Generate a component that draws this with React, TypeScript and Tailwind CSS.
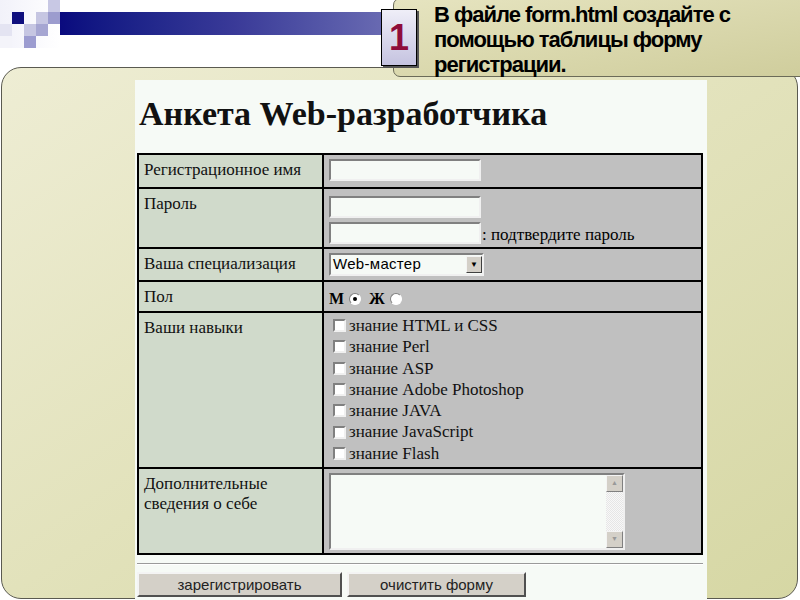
// Слайд: задание + скриншот формы регистрации (таблица).
const skills = [
  'знание HTML и CSS',
  'знание Perl',
  'знание ASP',
  'знание Adobe Photoshop',
  'знание JAVA',
  'знание JavaScript',
  'знание Flash',
];

const serif = "font-['Liberation_Serif','Times_New_Roman',serif]";
const sans = "font-['Liberation_Sans',Arial,sans-serif]";

function TextBox({ w = 'w-[152px]' }: { w?: string }) {
  return (
    <span
      className={`inline-block h-[22px] ${w} shrink-0 border-2 border-t-[#808080] border-l-[#808080] border-b-[#f0f0f0] border-r-[#f0f0f0] bg-[#f6faf6]`}
    />
  );
}

function Radio({ checked }: { checked?: boolean }) {
  return (
    <span className="mx-[5px] inline-flex h-[12px] w-[12px] items-center justify-center rounded-full border border-t-[#808080] border-l-[#808080] border-b-white border-r-white bg-white">
      {checked && <span className="h-[4px] w-[4px] rounded-full bg-black" />}
    </span>
  );
}

function Checkbox() {
  return (
    <span className="mr-[3px] inline-block h-[13px] w-[13px] shrink-0 border-2 border-t-[#808080] border-l-[#808080] border-b-[#f0f0f0] border-r-[#f0f0f0] bg-white" />
  );
}

function Row({
  label,
  h,
  children,
  last,
}: {
  label: React.ReactNode;
  h: string;
  children: React.ReactNode;
  last?: boolean;
}) {
  return (
    <div className={`flex ${h} ${last ? '' : 'border-b-2 border-black'}`}>
      <div className="w-[185px] shrink-0 border-r-2 border-black bg-[#d0dacb] px-[5px] pt-[5px] text-[17px] leading-[20px] text-[#111]">
        {label}
      </div>
      <div className="flex-1 bg-[#c0c0c0] px-[5px] pt-[4px]">{children}</div>
    </div>
  );
}

export default function App() {
  return (
    <div className="relative h-[600px] w-[800px] overflow-hidden bg-white">
      {/* Шапка слайда: клетки + синяя полоса */}
      <div className="flex h-[67px] items-start">
        <div className="grid grid-cols-[repeat(5,12px)] grid-rows-[repeat(4,12px)] bg-gradient-to-r from-[#f2f2fa] to-white">
          <span />
          <span />
          <span />
          <span />
          <span className="bg-[#c8c8e4]" />
          <span />
          <span className="bg-[#10107e]" />
          <span />
          <span className="bg-[#c6c6e2]" />
          <span className="bg-[#9c9cce]" />
          <span className="bg-[#e4e4f2]" />
          <span />
          <span className="bg-[#c6c6e2]" />
          <span className="bg-[#a6a6d2]" />
          <span />
          <span className="bg-[#f4f4fa]" />
          <span />
          <span className="bg-[#9c9cd0]" />
        </div>
        <div className="mt-[12px] h-[23px] w-[350px] bg-gradient-to-r from-[#0a0a7e] via-[#3a3a98] to-[#7272b6]" />
      </div>

      {/* Заголовок задания */}
      <div className="absolute left-[393px] top-[-2px] h-[79px] w-[420px] rounded-[7px] border border-[#6b6b58] bg-gradient-to-br from-[#e6e4c0] to-[#cfcd9c] pl-[40px] pt-[3px]">
        <p className="font-['Liberation_Sans_Narrow','Arial_Narrow','Liberation_Sans',sans-serif] text-[22px] font-bold leading-[25px] tracking-[-1px] text-black">
          В файле form.html создайте с
          <br />
          помощью таблицы форму
          <br />
          регистрации.
        </p>
      </div>
      <div className="absolute left-[381px] top-[9px] flex h-[57px] w-[36px] items-center justify-center border border-black bg-gradient-to-b from-[#efeef8] to-[#c5c3e0] shadow-[2px_2px_0_#555]">
        <span className={`${sans} text-[36px] font-bold text-[#8e0c3a]`}>1</span>
      </div>

      {/* Панель */}
      <div className="ml-[1px] h-[532px] w-[797px] rounded-[20px] border border-[#5a5a50] bg-gradient-to-br from-[#eeedd4] via-[#e2e2bb] to-[#d6d7a4] pl-[133px] pt-[12px]">
        <div className={`${serif} h-[520px] w-[572px] bg-[#f6faf6] pl-[2px] pt-[15px]`}>
          <h1 className="pl-[2px] text-[34px] font-bold leading-[38px] text-[#111]">
            Анкета Web-разработчика
          </h1>
          <div className="mt-[20px] w-[566px] border-2 border-black">
            <Row label="Регистрационное имя" h="h-[34px]">
              <TextBox />
            </Row>
            <Row label="Пароль" h="h-[60px]">
              <div className="flex flex-col gap-[4px] pt-[3px]">
                <TextBox />
                <div className="flex items-end text-[17px] leading-[18px]">
                  <TextBox />
                  <span className="ml-[1px]">: подтвердите пароль</span>
                </div>
              </div>
            </Row>
            <Row label="Ваша специализация" h="h-[33px]">
              <div className="flex h-[23px] w-[155px] items-center border-2 border-t-[#808080] border-l-[#808080] border-b-[#f0f0f0] border-r-[#f0f0f0] bg-[#f6faf6] pl-[2px]">
                <span className={`${sans} flex-1 text-[15px] tracking-[0.3px]`}>Web-мастер</span>
                <span className="flex h-[17px] w-[16px] items-center justify-center border border-t-[#f4f4f4] border-l-[#f4f4f4] border-b-[#404040] border-r-[#404040] bg-[#d4d0c8] text-[8px] leading-none">
                  ▼
                </span>
              </div>
            </Row>
            <Row label="Пол" h="h-[31px]">
              <div className="flex items-center pt-[5px] text-[16px] font-bold leading-[16px]">
                М<Radio checked />
                <span className="ml-[3px]">Ж</span>
                <Radio />
              </div>
            </Row>
            <Row label="Ваши навыки" h="h-[156px]">
              <div className="-mt-[2px] flex flex-col pl-[4px] text-[17px] leading-[21.3px] text-[#111]">
                {skills.map((s) => (
                  <div key={s} className="flex items-center">
                    <Checkbox />
                    {s}
                  </div>
                ))}
              </div>
            </Row>
            <Row
              label={
                <>
                  Дополнительные
                  <br />
                  сведения о себе
                </>
              }
              h="h-[84px]"
              last
            >
              <div className="flex h-[77px] w-[296px] border-2 border-t-[#808080] border-l-[#808080] border-b-[#f0f0f0] border-r-[#f0f0f0] bg-[#f6faf6]">
                <div className="flex-1" />
                <div className="flex w-[17px] flex-col bg-[repeating-conic-gradient(#e6e6e6_0%_25%,#f8f8f8_0%_50%)] bg-[length:2px_2px]">
                  <span className="flex h-[17px] items-center justify-center border border-t-[#f4f4f4] border-l-[#f4f4f4] border-b-[#808080] border-r-[#808080] bg-[#d4d0c8] text-[7px] text-[#999]">
                    ▲
                  </span>
                  <div className="flex-1" />
                  <span className="flex h-[17px] items-center justify-center border border-t-[#f4f4f4] border-l-[#f4f4f4] border-b-[#808080] border-r-[#808080] bg-[#d4d0c8] text-[7px] text-[#999]">
                    ▼
                  </span>
                </div>
              </div>
            </Row>
          </div>
          <div className="mt-[8px] h-[2px] w-[566px] border-t border-b border-t-[#9a9a9a] border-b-white" />
          <div className={`${sans} mt-[7px] flex gap-[5px] text-[15px] text-[#222]`}>
            <button className="h-[25px] w-[205px] border-2 border-t-[#f4f4f4] border-l-[#f4f4f4] border-b-[#505050] border-r-[#505050] bg-[#d4d0c8]">
              зарегистрировать
            </button>
            <button className="h-[25px] w-[179px] border-2 border-t-[#f4f4f4] border-l-[#f4f4f4] border-b-[#505050] border-r-[#505050] bg-[#d4d0c8]">
              очистить форму
            </button>
          </div>
        </div>
      </div>
    </div>
  );
}
